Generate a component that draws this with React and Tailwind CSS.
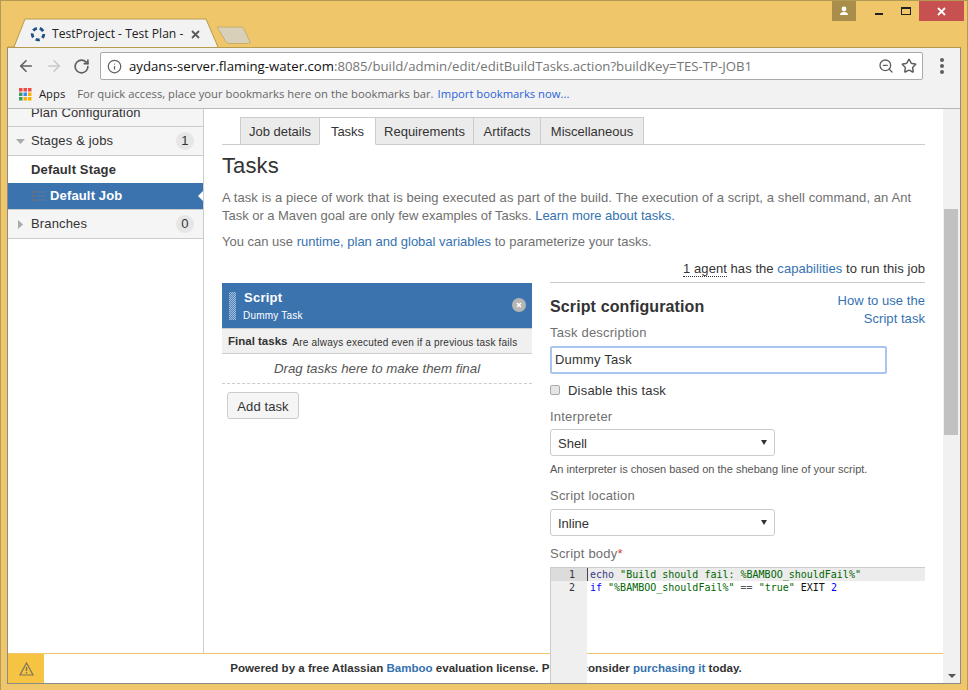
import React from "react";
import { ArrowLeft, ArrowRight, RotateCw, Info, ZoomOut, Star } from "lucide-react";

const sans = "font-['Liberation_Sans',Arial,sans-serif]";
const ui = "font-['Open_Sans','Noto_Sans',sans-serif]";

function Favicon() {
  return (
    <svg width="16" height="16" viewBox="0 0 16 16" className="shrink-0">
      <circle cx="8" cy="8" r="5.8" fill="none" stroke="#205081" strokeWidth="2.8" strokeDasharray="4.2 2.9" />
    </svg>
  );
}

function AppsIcon() {
  const c = ["#ef4b45", "#ef4b45", "#ef4b45", "#3f9c5f", "#3a8df5", "#fbb000", "#3f9c5f", "#fbb000", "#fbb000"];
  return (
    <svg width="13" height="13" viewBox="0 0 13 13" className="shrink-0">
      {c.map((f, i) => (
        <rect key={i} x={(i % 3) * 4.5} y={Math.floor(i / 3) * 4.5} width="3.5" height="3.5" fill={f} />
      ))}
    </svg>
  );
}

function TabBar() {
  return (
    <div className="relative h-[46px] shrink-0">
      <svg width="260" height="30" viewBox="0 0 260 30" className="absolute left-[6px] top-[17px]">
        <path d="M0.5 29 L7 29 L18 1 L199 1 L211 29" fill="#f2f2f2" stroke="#b89a4e" strokeWidth="1" />
        <path d="M210 9 L234 9 Q236 9 237 11 L243 24 Q243.5 25.5 241.5 25.5 L222 25.5 Q220 25.5 219 24 Z" fill="#d8d0b8" stroke="#c9ad6a" strokeWidth="1" />
      </svg>
      <div className="absolute left-[29px] top-[24px] flex items-center gap-[6px] w-[175px]">
        <Favicon />
        <span className={`${ui} text-[12.1px] text-[#222] whitespace-nowrap overflow-hidden w-[133px]`}>TestProject - Test Plan - E</span>
        <svg width="9" height="9" viewBox="0 0 9 9" className="shrink-0">
          <path d="M1 1 L8 8 M8 1 L1 8" stroke="#5a5a5a" strokeWidth="1.8" />
        </svg>
      </div>
      <div className="absolute top-0 left-[831px] w-[24px] h-[20px] bg-[#a98d4b] flex items-center justify-center">
        <svg width="10" height="10" viewBox="0 0 10 10">
          <circle cx="5" cy="3" r="2.4" fill="#fff" />
          <path d="M1 9 Q1 6 5 6 Q9 6 9 9 Z" fill="#fff" />
        </svg>
      </div>
      <div className="absolute top-[12px] left-[874px] w-[8px] h-[2px] bg-[#222]" />
      <div className="absolute top-[6px] left-[900px] w-[10px] h-[8px] border border-[#222] border-t-2" />
      <div className="absolute top-0 left-[918px] w-[45px] h-[20px] bg-[#c75050] flex items-center justify-center">
        <svg width="9" height="9" viewBox="0 0 9 9">
          <path d="M1 1 L8 8 M8 1 L1 8" stroke="#fff" strokeWidth="1.8" />
        </svg>
      </div>
    </div>
  );
}

function Toolbar() {
  return (
    <div className="h-[36px] shrink-0 flex items-center bg-[#f2f2f2] pl-[9px]">
      <ArrowLeft size={18} strokeWidth={2.2} color="#5f5f5f" />
      <ArrowRight size={18} strokeWidth={2.2} color="#c9c9c9" className="ml-[10px]" />
      <RotateCw size={17} strokeWidth={2.4} color="#5f5f5f" className="ml-[10px]" />
      <div className="ml-[10px] w-[823px] h-[28px] bg-white border border-[#a9a9a9] rounded-[2px] flex items-center pl-[6px] pr-[5px]">
        <Info size={15} strokeWidth={2} color="#5f5f5f" className="shrink-0" />
        <span className={`${ui} text-[13.2px] ml-[7px] whitespace-nowrap text-[#757575] relative top-[1px]`}>
          <span className="text-[#111]">aydans-server.flaming-water.com</span>:8085/build/admin/edit/editBuildTasks.action?buildKey=TES-TP-JOB1
        </span>
        <ZoomOut size={16} strokeWidth={2} color="#5f5f5f" className="ml-auto" />
        <Star size={16} strokeWidth={2.2} color="#5f5f5f" className="ml-[7px]" />
      </div>
      <div className="ml-[17px] flex flex-col gap-[2px]">
        <div className="w-[4px] h-[4px] rounded-full bg-[#5f5f5f]" />
        <div className="w-[4px] h-[4px] rounded-full bg-[#5f5f5f]" />
        <div className="w-[4px] h-[4px] rounded-full bg-[#5f5f5f]" />
      </div>
    </div>
  );
}

function Bookmarks() {
  return (
    <div className={`${ui} h-[25px] shrink-0 flex items-center bg-[#f2f2f2] pl-[11px] pb-[3px] border-b border-[#b8b8b8] text-[11.25px] whitespace-nowrap`}>
      <AppsIcon />
      <span className="ml-[7px] text-[#222]">Apps</span>
      <span className="ml-[12px] text-[#666]">For quick access, place your bookmarks here on the bookmarks bar.</span>
      <span className="ml-[4px] text-[#2a62d8]">Import bookmarks now...</span>
    </div>
  );
}

function Badge({ n }) {
  return (
    <span className="ml-auto mr-[9px] w-[18px] h-[18px] rounded-full bg-[#e6e6e6] flex items-center justify-center text-[13px] text-[#333]">{n}</span>
  );
}

function Sidebar() {
  return (
    <div className={`${sans} w-[196px] shrink-0 border-r border-[#ccc] text-[13px] text-[#333] tracking-[0.15px]`}>
      <div className="h-[18px] bg-[#f5f5f5] border-b border-[#ccc] pl-[23px] flex items-end overflow-hidden pb-[6px]">
        <span className="leading-[14px] shrink-0">Plan Configuration</span>
      </div>
      <div className="h-[29px] bg-[#f5f5f5] border-b border-[#ccc] flex items-center">
        <svg width="9" height="5" viewBox="0 0 9 5" className="ml-[8px]"><path d="M0 0 L9 0 L4.5 5 Z" fill="#aaa" /></svg>
        <span className="ml-[6px]">Stages &amp; jobs</span>
        <Badge n="1" />
      </div>
      <div className="h-[27px] flex items-center pl-[23px] pt-[1px] font-bold">Default Stage</div>
      <div className="relative h-[27px] bg-[#3b73af] flex items-center font-bold text-white border-b border-[#ccc]">
        <svg width="14" height="11" viewBox="0 0 14 11" className="ml-[24px]">
          <path d="M0 1 H3 M0 5 H3 M0 9 H3" stroke="#6a6f76" strokeWidth="2" />
          <path d="M4 1 H14 M4 5 H14 M4 9 H14" stroke="#55789f" strokeWidth="1.5" />
        </svg>
        <span className="ml-[4px]">Default Job</span>
        <div className="absolute right-0 top-[8px] w-0 h-0 border-y-[5px] border-y-transparent border-r-[5px] border-r-white" />
      </div>
      <div className="h-[29px] bg-[#f5f5f5] border-b border-[#ccc] flex items-center">
        <svg width="5" height="9" viewBox="0 0 5 9" className="ml-[10px]"><path d="M0 0 L5 4.5 L0 9 Z" fill="#aaa" /></svg>
        <span className="ml-[8px]">Branches</span>
        <Badge n="0" />
      </div>
    </div>
  );
}

function Tab({ w, active, children }) {
  return (
    <div
      style={{ width: w }}
      className={`h-[28px] border border-[#ccc] -mr-px pt-[2px] flex items-center justify-center ${active ? "bg-white border-b-white text-[#333] z-10 relative" : "bg-[#ebebeb] text-[#333]"}`}
    >
      {children}
    </div>
  );
}

function Select({ children }) {
  return (
    <div className="w-[225px] h-[27px] bg-white border border-[#ccc] rounded-[3px] flex items-center pl-[7px] pr-[7px] text-[#333]">
      <span className="relative top-[1px]">{children}</span>
      <span className="ml-auto w-0 h-0 border-x-[3px] border-x-transparent border-t-[5px] border-t-[#333]" />
    </div>
  );
}

function TaskColumn() {
  return (
    <div className="w-[310px] shrink-0">
      <div className="relative h-[46px] bg-[#3b73af] border-b border-[#ccc] text-white flex">
        <div className="ml-[7px] mt-[9px] w-[7px] h-[28px] bg-[conic-gradient(#9db9d8_25%,#5586ba_0_50%,#9db9d8_0_75%,#5586ba_0)] bg-[length:2px_2px]" />
        <div className="ml-[8px]">
          <div className="font-bold text-[13px] leading-[16px] mt-[7px] tracking-[0.25px]">Script</div>
          <div className="text-[10px] leading-[14px] mt-[3px] -ml-[1px] tracking-[0.2px]">Dummy Task</div>
        </div>
        <div className="absolute right-[6px] top-[15px] w-[14px] h-[14px] rounded-full bg-[#b5b5b5] flex items-center justify-center">
          <svg width="6" height="6" viewBox="0 0 6 6"><path d="M1 1 L5 5 M5 1 L1 5" stroke="#fff" strokeWidth="1.6" /></svg>
        </div>
      </div>
      <div className="h-[25px] bg-[#f0f0f0] border-b border-[#ccc] flex items-center pl-[6px] pt-[2px] whitespace-nowrap text-[#333]">
        <span className="font-bold text-[11.5px]">Final tasks</span>
        <span className="ml-[5px] text-[10px] tracking-[0.2px]">Are always executed even if a previous task fails</span>
      </div>
      <div className="h-[30px] border-b border-dashed border-[#ccc] flex items-center justify-center italic text-[#555] text-[13.3px]">Drag tasks here to make them final</div>
      <button className="block ml-[5px] mt-[8px] w-[72px] h-[27px] pt-[2px] bg-[#f5f5f5] border border-[#ccc] rounded-[3px] text-[#333] tracking-[0.1px]">Add task</button>
    </div>
  );
}

function Config() {
  const label = "text-[#707070] tracking-[0.22px] leading-[18px]";
  const cs = "font-['DejaVu_Sans_Mono',monospace] text-[10px] leading-[13px] whitespace-pre";
  return (
    <div className="ml-[18px] flex-1 min-w-0 border-t border-[#ccc] -mt-px">
      <div className="flex h-[41px] items-start justify-between">
        <h3 className="font-bold text-[16px] text-[#333] leading-[22px] mt-[13px] tracking-[0.12px] whitespace-nowrap">Script configuration</h3>
        <a className="text-[#3572b0] text-right leading-[18px] mt-[9px] tracking-[0.05px] block">How to use the<br />Script task</a>
      </div>
      <div className={label}>Task description</div>
      <div className="mt-[4px] w-[337px] h-[28px] rounded-[2px] border-2 border-[#a9c4ef] bg-white flex items-center pl-[3px] text-[#333] tracking-[0.2px]">Dummy Task</div>
      <div className="mt-[8px] h-[18px] flex items-center">
        <div className="w-[10px] h-[10px] rounded-[2px] border border-[#aaa] bg-[#e5e5e5] relative -top-[1px]" />
        <span className="ml-[8px] text-[#333] tracking-[0.2px]">Disable this task</span>
      </div>
      <div className={`${label} mt-[8px]`}>Interpreter</div>
      <div className="mt-[3px]"><Select>Shell</Select></div>
      <div className="mt-[6px] text-[11px] text-[#555] leading-[14px]">An interpreter is chosen based on the shebang line of your script.</div>
      <div className={`${label} mt-[11px]`}>Script location</div>
      <div className="mt-[4px]"><Select>Inline</Select></div>
      <div className={`${label} mt-[9px]`}>Script body<span className="text-[#d04437]">*</span></div>
      <div className="relative z-20 mt-[4px] h-[140px] border-t border-l border-[#ccc] flex">
        <div className="w-[36px] bg-[#efefef] text-[#333] text-right">
          <div className={`${cs} bg-[#dcdcdc] pr-[12px]`}>1</div>
          <div className={`${cs} pr-[12px]`}>2</div>
        </div>
        <div className="flex-1 pl-[3px] relative">
          <div className="absolute left-0 right-0 top-0 h-[13px] bg-[#ececec] border-l border-[#445]" />
          <div className={`relative ${cs} text-[#060]`}><span className="text-[#3b3b80]">echo</span> "Build should fail: %BAMBOO_shouldFail%"</div>
          <div className={`relative ${cs} text-[#111]`}><span className="text-[#00f]">if</span> <span className="text-[#060]">"%BAMBOO_shouldFail%"</span> <span className="text-[#555]">==</span> <span className="text-[#060]">"true"</span> EXIT <span className="text-[#00f]">2</span></div>
        </div>
      </div>
    </div>
  );
}

function Main() {
  return (
    <div className={`${sans} flex-1 min-w-0 pl-[18px] pr-[18px] pt-[8px] text-[13px] overflow-hidden`}>
      <div className="flex pl-[18px] border-b border-[#ccc] h-[28px]">
        <Tab w={80}>Job details</Tab>
        <Tab w={57} active>Tasks</Tab>
        <Tab w={99}>Requirements</Tab>
        <Tab w={68}>Artifacts</Tab>
        <Tab w={104}>Miscellaneous</Tab>
      </div>
      <h2 className="text-[22px] leading-[26px] mt-[8px] text-[#333] tracking-[0.1px]">Tasks</h2>
      <p className="mt-[10px] leading-[18px] text-[#707070]">
        <span className="tracking-[0.09px]">A task is a piece of work that is being executed as part of the build. The execution of a script, a shell command, an Ant</span><br />
        <span className="tracking-[-0.03px]">Task or a Maven goal are only few examples of Tasks. <a className="text-[#3572b0]">Learn more about tasks.</a></span>
      </p>
      <p className="mt-[8px] leading-[18px] text-[#707070]">
        You can use <a className="text-[#3572b0]">runtime, plan and global variables</a> to parameterize your tasks.
      </p>
      <div className="mt-[9px] h-[18px] leading-[18px] text-right text-[#333] tracking-[0.06px]">
        <span className="border-b border-dotted border-[#333]">1 agent</span> has the <a className="text-[#3572b0]">capabilities</a> to run this job
      </div>
      <div className="flex mt-[5px]">
        <TaskColumn />
        <Config />
      </div>
    </div>
  );
}

function Scrollbar() {
  return (
    <div className="w-[17px] shrink-0 bg-[#f1f1f1] relative z-30">
      <div className="h-[100px]" />
      <div className="ml-[1px] w-[14px] h-[226px] bg-[#c1c1c1]" />
      <div className="absolute bottom-[5px] left-[5px] w-0 h-0 border-x-[4px] border-x-transparent border-t-[4px] border-t-[#555]" />
    </div>
  );
}

function Footer() {
  return (
    <div className={`${sans} absolute left-0 right-[17px] bottom-0 h-[30px] bg-white border-t border-[#efc76a] flex items-stretch z-10`}>
      <div className="w-[36px] bg-[#f6c343] flex items-center justify-center">
        <svg width="15" height="14" viewBox="0 0 15 14">
          <path d="M7.5 1 L14 13 L1 13 Z" fill="none" stroke="#7d7458" strokeWidth="1.2" />
          <path d="M7.5 5 V9 M7.5 10 V11.5" stroke="#7d7458" strokeWidth="1.4" />
        </svg>
      </div>
      <div className="flex-1 text-[11.55px] font-bold text-[#333] text-center leading-[28px] pr-[15px] whitespace-nowrap">
        Powered by a free Atlassian <a className="text-[#3572b0]">Bamboo</a> evaluation license. Please consider <a className="text-[#3572b0]">purchasing it</a> today.
      </div>
    </div>
  );
}

export default function App() {
  return (
    <div className="w-[968px] h-[690px] bg-[#efc76a] border-t border-x border-[#b39a55] flex flex-col overflow-hidden">
      <TabBar />
      <div className="mx-[6px] mb-[6px] flex-1 min-h-0 flex flex-col border-l border-b border-r border-[#8a8a8a] border-t border-t-[#b89a4e]">
        <Toolbar />
        <Bookmarks />
        <div className="relative flex-1 min-h-0 flex bg-white overflow-hidden">
          <Sidebar />
          <Main />
          <Scrollbar />
          <Footer />
        </div>
      </div>
    </div>
  );
}
